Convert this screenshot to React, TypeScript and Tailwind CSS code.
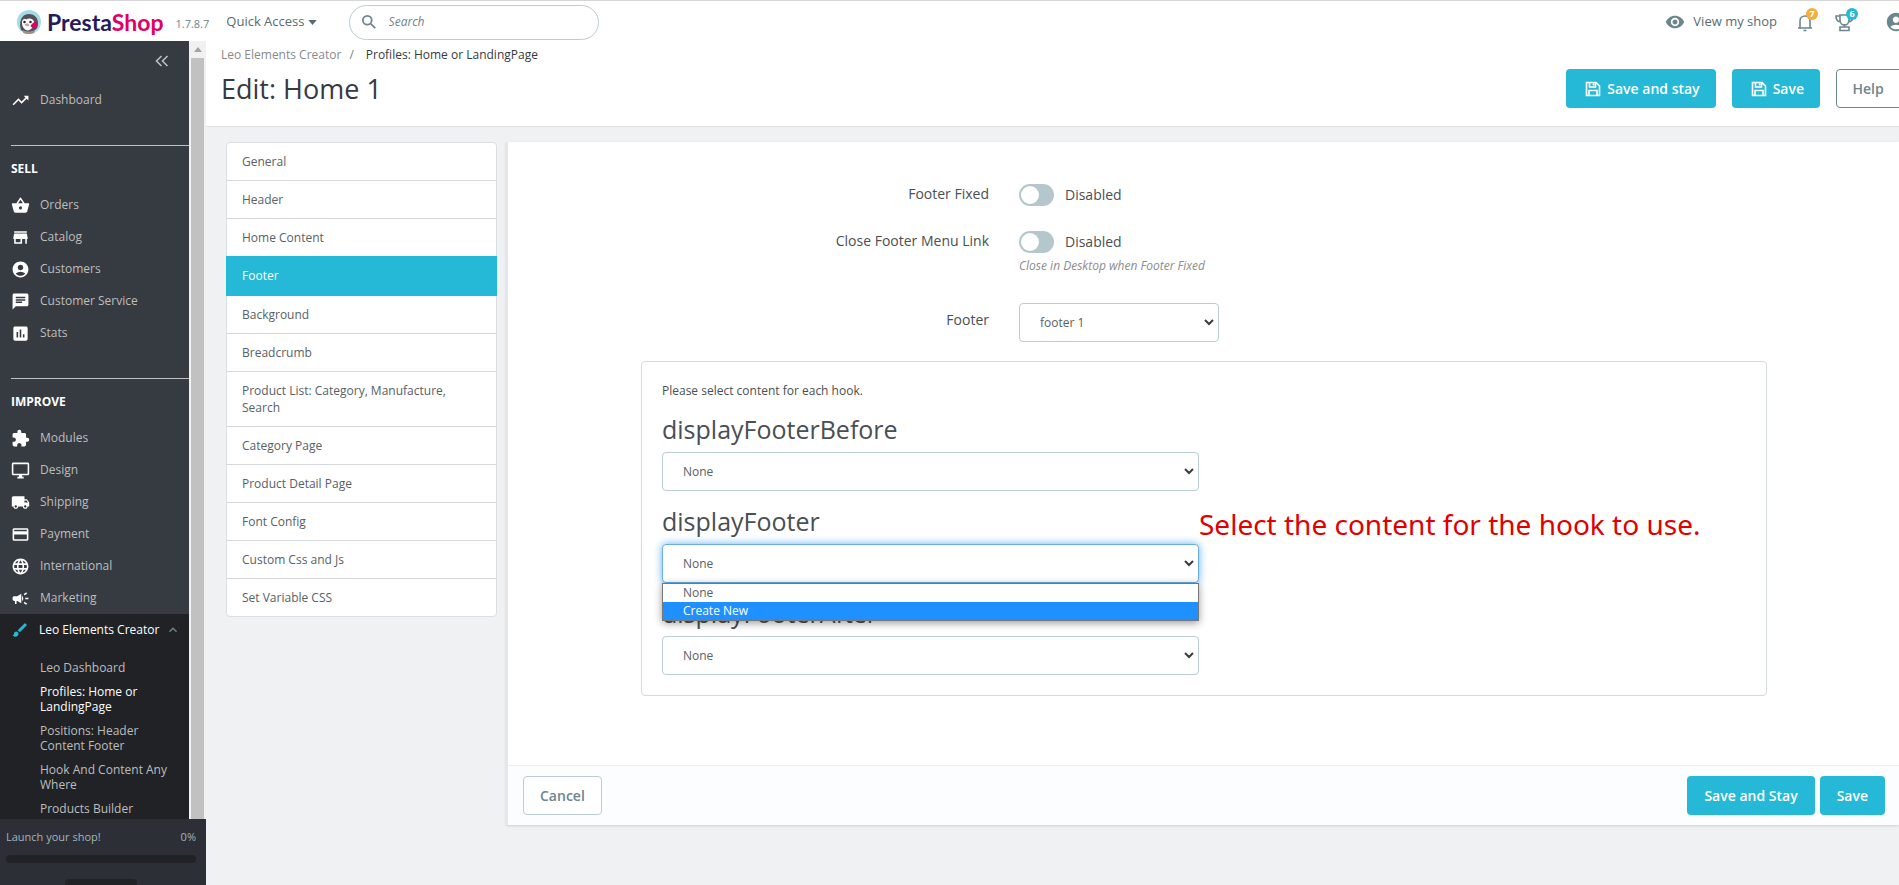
import type { ReactNode } from 'react';
import {
    MdAccountCircle,
    MdAssessment,
    MdBrush,
    MdCampaign,
    MdChat,
    MdCreditCard,
    MdExpandLess,
    MdExtension,
    MdLanguage,
    MdLocalShipping,
    MdOutlineDesktopWindows,
    MdRemoveRedEye,
    MdShoppingBasket,
    MdStore,
    MdTrendingUp
} from 'react-icons/md';

interface MenuItem {
    label: string;
    icon: ReactNode;
}

const sellMenu: MenuItem[] = [
    { label: 'Orders', icon: <MdShoppingBasket /> },
    { label: 'Catalog', icon: <MdStore /> },
    { label: 'Customers', icon: <MdAccountCircle /> },
    { label: 'Customer Service', icon: <MdChat /> },
    { label: 'Stats', icon: <MdAssessment /> }
];

const improveMenu: MenuItem[] = [
    { label: 'Modules', icon: <MdExtension /> },
    { label: 'Design', icon: <MdOutlineDesktopWindows /> },
    { label: 'Shipping', icon: <MdLocalShipping /> },
    { label: 'Payment', icon: <MdCreditCard /> },
    { label: 'International', icon: <MdLanguage /> },
    { label: 'Marketing', icon: <MdCampaign /> }
];

const leoMenu = [
    'Leo Dashboard',
    'Profiles: Home or LandingPage',
    'Positions: Header Content Footer',
    'Hook And Content Any Where',
    'Products Builder'
];

const tabs = [
    'General',
    'Header',
    'Home Content',
    'Footer',
    'Background',
    'Breadcrumb',
    'Product List: Category, Manufacture, Search',
    'Category Page',
    'Product Detail Page',
    'Font Config',
    'Custom Css and Js',
    'Set Variable CSS'
];

function Logo() {
    return (
        <a href="#home" className="flex items-center gap-1.5" aria-label="PrestaShop">
            <svg viewBox="0 0 48 48" className="h-6 w-6">
                <circle cx="24" cy="24" r="24" fill="#a4dbe8" />
                <path d="M8 40C3 26 8 8 23 8c13 0 20 9 19 21-1 9-7 14-17 15-7 0-13-1-17-4z" fill="#55525a" />
                <path d="M10 27c-1-7 4-11 9-8 4-4 13-2 15 4 2 8-5 17-13 18-6-1-10-6-11-14z" fill="#fff" />
                <circle cx="15" cy="24" r="2.500" fill="#2a2430" />
                <circle cx="27" cy="24" r="2.500" fill="#2a2430" />
                <path d="M15 29c3-3 8-2 10 1-2 3-7 4-10-1z" fill="#b9a79c" />
                <path d="M27 32c2-5 8-9 10-8 3 1 5 7 3 11-3 3-10 2-13-3z" fill="#df0067" />
                <path d="M12 40c7 4 15 4 23 1v4c-7 4-17 4-23 0z" fill="#a58d80" />
            </svg>
            <span className="font-['Lato',sans-serif] text-[23px] leading-8 font-bold text-[#251b5b]">
                Presta<span className="text-[#df0067]">Shop</span>
            </span>
        </a>
    );
}

function TopBar() {
    return (
        <header className="flex h-[41px] items-center overflow-hidden border-t border-[#d6d6d6] bg-white pt-0.5 pl-[17px]">
            <Logo />
            <span className="mt-1 ml-3 text-[11px] text-[#6c868e]">1.7.8.7</span>
            <button type="button" className="ml-[17px] flex items-center gap-1 text-[13px] text-[#576c72]">
                Quick Access
                <svg viewBox="0 0 10 6" className="h-[5px] w-[9px] fill-current">
                    <path d="M0 0h10L5 6z" />
                </svg>
            </button>
            <label className="ml-8 flex h-[35px] w-[250px] items-center gap-3 rounded-full border border-[#bbcdd2] px-3">
                <svg viewBox="0 0 16 16" className="h-4 w-4 fill-none stroke-[#6c868e] stroke-2">
                    <circle cx="6" cy="6" r="5" />
                    <path d="M10 10l5 5" />
                </svg>
                <input
                    type="text"
                    aria-label="Search"
                    placeholder="Search"
                    className="w-full bg-transparent text-xs italic outline-none placeholder:text-[#6c868e]"
                />
            </label>
            <div className="-mr-2 ml-auto flex items-center text-[#6c868e]">
                <a href="#shop" className="flex items-center gap-2 text-[13px] text-[#576c72]">
                    <MdRemoveRedEye className="h-5 w-5 text-[#6c868e]" />
                    View my shop
                </a>
                <button type="button" aria-label="Notifications" className="relative ml-[18px]">
                    <svg viewBox="0 0 20 20" className="h-5 w-5 fill-none stroke-current stroke-[1.6]">
                        <path d="M3 16h14M5 16V9c0-3 2-5 5-5s5 2 5 5v7M8.500 18.500h3" />
                    </svg>
                    <span className="absolute -top-1 left-[11px] flex h-3 w-3 items-center justify-center rounded-full bg-[#f1b03d] text-[9px] font-bold text-white">
                        7
                    </span>
                </button>
                <button type="button" aria-label="Achievements" className="relative ml-5">
                    <svg viewBox="0 0 20 20" className="h-5 w-5 fill-none stroke-current stroke-[1.6]">
                        <path d="M5 3h9v5c0 3-2 5-4.500 5S5 11 5 8zM5 4H1c0 4 1 6 5 6M14 4h4c0 4-1 6-5 6M9.500 12v3M5 15h9v3.500H5z" />
                    </svg>
                    <span className="absolute -top-1 left-[11px] flex h-3 w-3 items-center justify-center rounded-full bg-[#25b9d7] text-[9px] font-bold text-white">
                        6
                    </span>
                </button>
                <button type="button" aria-label="Account" className="ml-[30px]">
                    <MdAccountCircle className="h-[22px] w-[22px]" />
                </button>
            </div>
        </header>
    );
}

function MenuSection({ title, items }: { title: string; items: MenuItem[] }) {
    return (
        <section className="ml-[11px] border-t border-[#bec0c4] pt-[14px]">
            <h2 className="text-xs leading-[18px] font-bold text-white">{title}</h2>
            <ul className="mt-[11px]">
                {items.map((item) => (
                    <li key={item.label}>
                        <a href="#menu" className="flex h-8 items-center gap-[10px] text-xs text-[#bebebe]">
                            <span className="text-[19px] text-white">{item.icon}</span>
                            {item.label}
                        </a>
                    </li>
                ))}
            </ul>
        </section>
    );
}

function Sidebar() {
    return (
        <aside className="flex w-[206px] shrink-0 flex-col">
            <div className="flex min-h-0 flex-1">
                <nav className="w-[189px] overflow-hidden bg-[#363a41]">
                    <div className="flex h-10 items-center justify-end pr-5">
                        <button type="button" aria-label="Collapse menu">
                            <svg viewBox="0 0 14 12" className="h-3 w-3.5 fill-none stroke-[#bebebe] stroke-[1.6]">
                                <path d="M6.500 1l-5 5 5 5M12.500 1l-5 5 5 5" />
                            </svg>
                        </button>
                    </div>
                    <a href="#dashboard" className="mt-[3px] mb-[29px] ml-[11px] flex h-8 items-center gap-[10px] text-xs text-[#bebebe]">
                        <MdTrendingUp className="h-[19px] w-[19px] stroke-current text-white" />
                        Dashboard
                    </a>
                    <MenuSection title="SELL" items={sellMenu} />
                    <div className="h-[29px]" />
                    <MenuSection title="IMPROVE" items={improveMenu} />
                    <div className="h-60 bg-[#202226] pl-[11px]">
                        <a href="#leo" className="flex h-8 items-center gap-[10px] text-xs font-medium text-white">
                            <MdBrush className="h-[18px] w-[18px] shrink-0 text-[#25b9d7]" />
                            <span className="whitespace-nowrap">Leo Elements Creator</span>
                            <MdExpandLess className="-ml-1 h-4 w-4 shrink-0 text-[#6c868e]" />
                        </a>
                        <ul className="mt-[14px] space-y-[9px] pr-4 pl-[29px] text-xs leading-[15px] text-[#bebebe]">
                            {leoMenu.map((label, index) => (
                                <li key={label} className={index === 1 ? 'font-medium text-white' : ''}>
                                    <a href="#leo">{label}</a>
                                </li>
                            ))}
                        </ul>
                    </div>
                </nav>
                {/* Barra de scroll del menú */}
                <div className="w-[17px] border-x-2 border-[#f1f1f1] bg-[#c1c1c1]">
                    <div className="flex h-[17px] items-center justify-center bg-[#f1f1f1]">
                        <svg viewBox="0 0 8 5" className="h-[5px] w-2 fill-[#a3a3a3]">
                            <path d="M0 5h8L4 0z" />
                        </svg>
                    </div>
                </div>
            </div>
            <div className="h-[66px] shrink-0 overflow-hidden bg-[#2d2f37] px-[6px] pt-[9px] pr-[10px] text-[11px] leading-[18px] text-[#a2b4ba]">
                <div className="flex justify-between">
                    <span>Launch your shop!</span>
                    <span>0%</span>
                </div>
                <div className="mt-[9px] h-2 rounded-full bg-[#202226]" />
                <div className="mx-auto mt-4 h-8 w-[72px] rounded bg-[#202226]" />
            </div>
        </aside>
    );
}

function PageHeader() {
    return (
        <div className="flex h-[86px] justify-between overflow-hidden border-b border-[#dfe1e3] bg-white pl-[15px]">
            <div>
                <nav className="mt-[5px] flex gap-2 text-xs leading-[18px]">
                    <a href="#creator" className="text-[#8a8a8a]">Leo Elements Creator</a>
                    <span className="text-[#6c868e]">/</span>
                    <span className="ml-1 text-[#363a41]">Profiles: Home or LandingPage</span>
                </nav>
                <h1 className="mt-[7px] text-[27px] leading-9 text-[#363a41]">Edit: Home 1</h1>
            </div>
            <div className="-mr-[15px] flex gap-4 pt-7">
                <PrimaryButton icon>Save and stay</PrimaryButton>
                <PrimaryButton icon>Save</PrimaryButton>
                <button type="button" className="h-[39px] w-[78px] rounded border border-[#6c868e] pr-[14px] text-sm font-semibold text-[#6c868e]">
                    Help
                </button>
            </div>
        </div>
    );
}

function SaveIcon() {
    return (
        <svg viewBox="0 0 16 16" className="h-4 w-4 fill-none stroke-current stroke-[1.6]">
            <path d="M1.500 1.500h9.500l3.500 3.500v9.500h-13zM4.500 1.500v4.500h6V1.500M8.500 2.500v2M4 14.500v-5h8v5" />
        </svg>
    );
}

function PrimaryButton({ children, icon = false }: { children: ReactNode; icon?: boolean }) {
    return (
        <button
            type="button"
            className={`flex h-[39px] items-center gap-1.5 rounded bg-[#25b9d7] text-sm font-semibold text-white ${icon ? 'pr-4 pl-[19px]' : 'px-[17px]'}`}
        >
            {icon && <SaveIcon />}
            {children}
        </button>
    );
}

function Tabs() {
    return (
        <ul className="w-[271px] shrink-0 self-start rounded border border-[#dcdfe1] bg-white text-xs leading-[17px] text-[#576166]">
            {tabs.map((tab) => (
                <li key={tab} className="border-b border-[#d5d8da] last:border-b-0">
                    <a
                        href="#tab"
                        className={
                            tab === 'Footer'
                                ? '-mx-px -my-px block bg-[#25b9d7] px-4 pt-[11px] pb-3 text-white'
                                : 'block px-[15px] py-[10px]'
                        }
                    >
                        {tab}
                    </a>
                </li>
            ))}
        </ul>
    );
}

function Toggle({ id }: { id: string }) {
    return (
        <span className="flex h-[22px] items-center gap-[11px] text-sm text-[#4a4f52]">
            <input
                id={id}
                type="checkbox"
                role="switch"
                className="h-[22px] w-[35px] appearance-none rounded-full bg-[#b3c7cd] before:mt-0.5 before:ml-0.5 before:block before:h-[18px] before:w-[18px] before:rounded-full before:bg-white checked:bg-[#25b9d7]"
            />
            Disabled
        </span>
    );
}

interface SelectBoxProps {
    id: string;
    options: string[];
    className: string;
}

function SelectBox({ id, options, className }: SelectBoxProps) {
    return (
        <span className={`flex h-[39px] items-center rounded border bg-white pr-1 ${className}`}>
            <select id={id} className="h-full min-w-0 flex-1 appearance-none pl-5 text-xs text-[#576166] outline-none">
                {options.map((option) => (
                    <option key={option}>{option}</option>
                ))}
            </select>
            <svg viewBox="0 0 10 7" className="h-[7px] w-[10px] fill-none stroke-[#3c3c3c] stroke-2">
                <path d="M1 1l4 4 4-4" />
            </svg>
        </span>
    );
}

function HookField({ name, open = false }: { name: string; open?: boolean }) {
    return (
        <div className="relative">
            <label htmlFor={name} className="mb-2 block text-[25px] leading-[29px] text-[#4a4f52]">
                {name}
            </label>
            <SelectBox
                id={name}
                options={['None', 'Create New']}
                className={open ? 'border-[#66afe9] shadow-[0_0_8px_#66afe9]' : 'border-[#bbcdd2]'}
            />
            {open && (
                <ul
                    role="listbox"
                    className="absolute inset-x-0 top-full z-10 border border-[#767676] bg-white text-xs leading-[18px] text-[#576166] shadow-[0_2px_8px_rgba(0,0,0,0.4)]"
                >
                    <li role="option" aria-selected="false" className="pl-5">None</li>
                    <li role="option" aria-selected="true" className="bg-[#1e90ff] pl-5 text-white">Create New</li>
                </ul>
            )}
            {open && (
                <p className="absolute -top-[3px] left-full font-['Noto_Sans',sans-serif] text-[28px] leading-10 whitespace-nowrap text-[#e00000]">
                    Select the content for the hook to use.
                </p>
            )}
        </div>
    );
}

function FooterForm() {
    return (
        <form className="min-w-0 flex-1 border-l-2 border-[#e4e6e9] bg-white shadow-sm">
            <div className="pt-[42px] pb-[69px]">
                <div className="grid grid-cols-[481px_1fr] gap-x-[30px] text-sm leading-5 text-[#4a4f52]">
                    <label htmlFor="footer-fixed" className="text-right">Footer Fixed</label>
                    <Toggle id="footer-fixed" />
                    <label htmlFor="close-footer" className="mt-[25px] text-right">Close Footer Menu Link</label>
                    <div className="mt-[25px]">
                        <Toggle id="close-footer" />
                        <p className="mt-1 text-xs leading-[18px] text-[#8c8c8c] italic">
                            Close in Desktop when Footer Fixed
                        </p>
                    </div>
                    <label htmlFor="footer-select" className="mt-[35px] text-right">Footer</label>
                    <SelectBox id="footer-select" options={['footer 1']} className="mt-7 w-[200px] border-[#bbcdd2]" />
                </div>
                <div className="mt-[19px] mr-[132px] ml-[133px] rounded border border-[#d5dbdd] px-5 pt-5 pb-5">
                    <p className="text-xs leading-[18px] text-[#4a4f52]">Please select content for each hook.</p>
                    <div className="mt-[15px] w-[537px] space-y-4">
                        <HookField name="displayFooterBefore" />
                        <HookField name="displayFooter" open />
                        <HookField name="displayFooterAfter" />
                    </div>
                </div>
            </div>
            <div className="flex gap-[5px] border-t border-[#eceeef] bg-[#fcfdfe] py-[10px] pr-[14px] pl-[15px]">
                <button type="button" className="mr-auto h-[39px] rounded border border-[#bbcdd2] bg-white px-4 text-sm font-semibold text-[#6c868e]">
                    Cancel
                </button>
                <PrimaryButton>Save and Stay</PrimaryButton>
                <PrimaryButton>Save</PrimaryButton>
            </div>
        </form>
    );
}

export default function App() {
    return (
        <div className="flex h-screen flex-col overflow-hidden bg-[#eff1f2] font-['Open_Sans',sans-serif]">
            <TopBar />
            <div className="flex min-h-0 flex-1">
                <Sidebar />
                <main className="min-w-0 flex-1">
                    <PageHeader />
                    <div className="flex items-start gap-[9px] pt-[15px] pl-5">
                        <Tabs />
                        <FooterForm />
                    </div>
                </main>
            </div>
        </div>
    );
}
